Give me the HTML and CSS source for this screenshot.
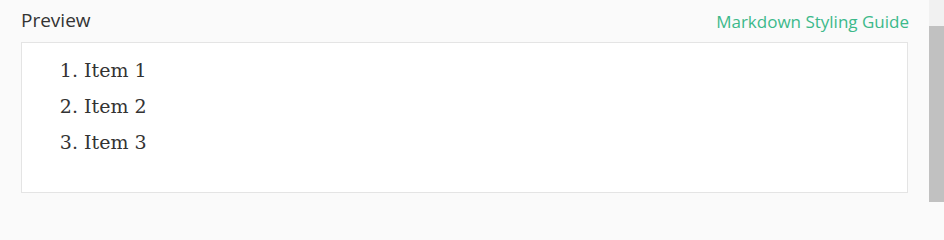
FILE: index.html
```html
<!DOCTYPE html>
<html>
<head>
<meta charset="utf-8">
<link rel="stylesheet" href="styles.css">
</head>
<body>
<div class="page">
  <div class="main">
    <div class="header">
      <span class="title">Preview</span>
      <a class="guide" href="#">Markdown Styling Guide</a>
    </div>
    <div class="preview">
      <ol class="list">
        <li>Item 1</li>
        <li>Item 2</li>
        <li>Item 3</li>
      </ol>
    </div>
  </div>
  <div class="scrollbar">
    <div class="track"></div>
    <div class="thumb"></div>
  </div>
</div>
</body>
</html>
```

FILE: styles.css
```css
html, body {
  margin: 0;
  padding: 0;
  height: 202px;
}
body {
  background: #fafafa;
  font-family: "Open Sans", "Noto Sans", sans-serif;
  overflow: hidden;
}
.page {
  display: flex;
  height: 202px;
}
.main {
  flex: 1;
  padding: 0 21px;
}
.header {
  display: flex;
  justify-content: space-between;
  align-items: flex-start;
  height: 42px;
  box-sizing: border-box;
}
.title {
  font-size: 19px;
  line-height: 24px;
  padding-top: 8px;
  color: #333;
}
.guide {
  font-size: 17px;
  line-height: 24px;
  padding-top: 10px;
  color: #3cb98a;
  text-decoration: none;
  margin-right: -1px;
}
.preview {
  background: #fff;
  border: 1px solid #e4e4e4;
  height: 151px;
  box-sizing: border-box;
  padding: 9px 0 0;
}
.list {
  margin: 0;
  padding-left: 62px;
  font-family: "DejaVu Serif", serif;
  font-size: 19px;
  line-height: 36px;
  color: #333;
}
.scrollbar {
  width: 15px;
  display: flex;
  flex-direction: column;
  background: #f1f1f1;
}
.track {
  height: 26px;
}
.thumb {
  flex: 1;
  background: #c1c1c1;
}
```
